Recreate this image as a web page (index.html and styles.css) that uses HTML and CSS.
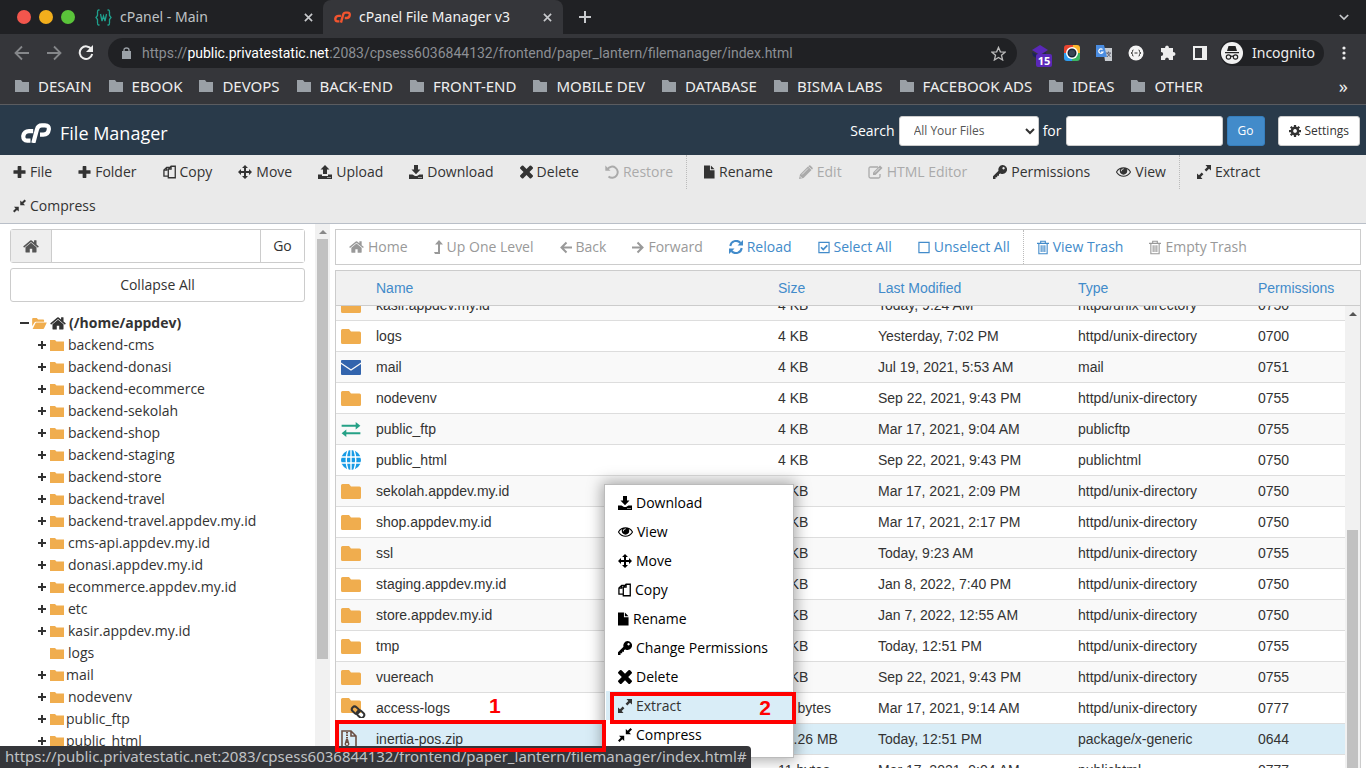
FILE: index.html
```html
<!DOCTYPE html>
<html lang="en">
<head>
<meta charset="utf-8">
<title>cPanel File Manager v3</title>
<link rel="stylesheet" href="styles.css">
</head>
<body>
<svg class="sprite" aria-hidden="true">
  <symbol id="plus" viewBox="0 0 14 14"><path d="M5.500.5h3q.5 0 .5.5v4h4q.5 0 .5.500v3q0 .5-.5.500H9v4q0 .5-.5.500h-3q-.5 0-.5-.5V9H1q-.5 0-.5-.5v-3Q.5 5 1 5h4V1q0-.5.500-.5z"/></symbol>
  <symbol id="thinplus" viewBox="1 0 10 10"><path d="M4 1h2v3h3v2H6v3H4V6H1V4h3z"/></symbol>
  <symbol id="minus" viewBox="0 0 10 10"><path d="M0 4h9v2H0z"/></symbol>
  <symbol id="copy" viewBox="0 0 14 14"><path fill="none" stroke="currentColor" stroke-width="1.400" d="M5.500 11.500H1V5l3-3h3M4 2v3H1M8.700.8H13.200v12.400H5.700V4zM8.700.8V4h-3"/></symbol>
  <symbol id="move" viewBox="0 0 14 14"><path d="M7 0l3 3H8v3h3V4l3 3-3 3V8H8v3h2l-3 3-3-3h2V8H3v2L0 7l3-3v2h3V3H4z"/></symbol>
  <symbol id="upload" viewBox="0 0 14 14"><path d="M7 0l4.500 4.500H9V9H5V4.500H2.500zM0 9.500h4V11h6V9.500h4V14H0z"/><path fill="#fff" d="M9.500 12h1v1h-1zM11.500 12h1v1h-1z"/></symbol>
  <symbol id="download" viewBox="0 0 14 14"><path d="M5 0h4v4.500h2.500L7 9.200 2.500 4.500H5zM0 9.500h3.500L6 11h2l2.500-1.500H14V14H0z"/><path fill="#fff" d="M9.500 12h1v1h-1zM11.500 12h1v1h-1z"/></symbol>
  <symbol id="times" viewBox="300 366 1190 1190"><path d="M1490 1322q0 40-28 68l-136 136q-28 28-68 28t-68-28l-294-294-294 294q-28 28-68 28t-68-28l-136-136q-28-28-28-68t28-68l294-294-294-294q-28-28-28-68t28-68l136-136q28-28 68-28t68 28l294 294 294-294q28-28 68-28t68 28l136 136q28 28 28 68t-28 68l-294 294 294 294q28 28 28 68z"/></symbol>
  <symbol id="undo" viewBox="0 0 14 14"><path fill="none" stroke="currentColor" stroke-width="2" d="M2.500 4A5.600 5.600 0 1 1 3.500 11.500"/><path d="M.3.500l5.200 5.200H.3z"/></symbol>
  <symbol id="file" viewBox="0 0 12 14"><path d="M0 0h6.500v5H11.500v9H0zM7.500 0l4 4h-4z"/></symbol>
  <symbol id="pencil" viewBox="0 0 14 14"><path d="M0 14l1-4.500L9 1.500 12.500 5l-8 8zM9.800.8Q10.600 0 11.400.6l2 2q.7.800 0 1.600l-.4.400L9.400 1.200z"/><path stroke="#eee" stroke-width=".8" d="M3 9.500l6-6M1 11.300L2.700 13"/></symbol>
  <symbol id="edit" viewBox="0 0 15 14"><path fill="none" stroke="currentColor" stroke-width="1.300" d="M10 2H2.500Q1 2 1 3.500v8Q1 13 2.500 13h8q1.500 0 1.500-1.500V9"/><path d="M5 10V7.500L12 .5l2.500 2.500-7 7z"/><path stroke="#eee" stroke-width=".8" d="M7 7.500l4.500-4.500"/></symbol>
  <symbol id="key" viewBox="0 0 14 14"><path fill-rule="evenodd" d="M9.500 0a4.500 4.500 0 1 1-2 8.500L6 9v1.700H4.200v1.600H2.500V14H0v-2.800l5.500-5.500A4.500 4.500 0 0 1 9.500 0zm1 2a1.200 1.200 0 1 0 .1 0z"/></symbol>
  <symbol id="eye" viewBox="0 384 1792 1152"><path d="M1664 960q-152-236-381-353 61 104 61 225 0 185-131.500 316.500t-316.500 131.500-316.500-131.500-131.500-316.500q0-121 61-225-229 117-381 353 133 205 333.500 326.500t434.500 121.500 434.500-121.500 333.500-326.500zm-720-384q0-20-14-34t-34-14q-125 0-214.500 89.500t-89.500 214.500q0 20 14 34t34 14 34-14 14-34q0-86 61-147t147-61q20 0 34-14t14-34zm848 384q0 34-20 69-140 230-376.500 368.500t-499.500 138.500-499.500-139-376.500-368q-20-35-20-69t20-69q140-229 376.500-368t499.500-139 499.500 139 376.500 368q20 35 20 69z"/></symbol>
  <symbol id="expand" viewBox="0 0 14 14"><path d="M8.500 0H14v5.500l-2-1.800-2.700 2.700-1.700-1.700L10.300 2zM0 8.500l2 1.800 2.700-2.700 1.700 1.700L3.700 12l1.800 2H0z"/></symbol>
  <symbol id="compress" viewBox="0 0 14 14"><path d="M12.500 0L14 1.500 11.200 4.300 13 6.200H7.800V1l1.900 1.800zM1 7.800h5.200V13l-1.900-1.800L1.500 14 0 12.500l2.800-2.800z"/></symbol>
  <symbol id="home" viewBox="60 240 1672 1330"><path d="M1472 992v480q0 26-19 45t-45 19h-384v-384h-256v384h-384q-26 0-45-19t-19-45v-480q0-1 .5-3t.5-3l575-474 575 474q1 2 1 6zm223-69l-62 74q-8 9-21 11h-3q-13 0-21-7l-692-577-692 577q-12 8-24 7-13-2-21-11l-62-74q-8-10-7-23.500t11-21.500l719-599q32-26 76-26t76 26l244 204v-195q0-14 9-23t23-9h192q14 0 23 9t9 23v408l219 182q10 8 11 21.500t-7 23.500z"/></symbol>
  <symbol id="levelup" viewBox="0 0 9 14"><path d="M5 0l4 4.500H6V14H1l-1-2h4V4.500H1z"/></symbol>
  <symbol id="left" viewBox="0 0 12 12"><path fill="none" stroke="currentColor" stroke-width="2" d="M6.500 1l-5 5 5 5M2 6h10"/></symbol>
  <symbol id="right" viewBox="0 0 12 12"><path fill="none" stroke="currentColor" stroke-width="2" d="M5.500 1l5 5-5 5M10 6H0"/></symbol>
  <symbol id="reload" viewBox="0 0 14 14"><path fill="none" stroke="currentColor" stroke-width="2" d="M1.300 6A5.800 5.800 0 0 1 11.500 3M12.700 8A5.800 5.800 0 0 1 2.500 11"/><path d="M14 0v5.500H8.500zM0 14V8.500h5.500z"/></symbol>
  <symbol id="checked" viewBox="0 0 13 13"><path fill="none" stroke="currentColor" stroke-width="1.300" d="M1 1h11v11H1z"/><path fill="none" stroke="currentColor" stroke-width="1.800" d="M3.300 6.200l2.400 2.500 4.400-4.500"/></symbol>
  <symbol id="unchecked" viewBox="0 0 13 13"><path fill="none" stroke="currentColor" stroke-width="1.300" d="M1 1h11v11H1z"/></symbol>
  <symbol id="trash" viewBox="0 0 13 15"><path fill="none" stroke="currentColor" stroke-width="1.200" d="M4 2.500V.8h5v1.700M0 3h13M2 3v11.300h9V3M4.500 5v7.500M6.500 5v7.500M8.500 5v7.500"/></symbol>
  <symbol id="cog" viewBox="0 0 16 16"><path fill="none" stroke="currentColor" stroke-width="3.400" d="M8 3.800a4.200 4.200 0 1 0 .1 0z"/><path stroke="currentColor" stroke-width="3" d="M8 0v3M8 13v3M0 8h3M13 8h3M2.300 2.300l2 2M11.700 11.700l2 2M13.700 2.300l-2 2M4.300 11.700l-2 2"/></symbol>
  <symbol id="folder" viewBox="0 0 20 15"><path d="M0 1.500Q0 0 1.500 0H8l2 2.500h8.500Q20 2.500 20 4v9.500q0 1.500-1.500 1.500h-17Q0 15 0 13.500z"/></symbol>
  <symbol id="treefolder" viewBox="0 0 14 11"><path d="M0 0h5l1.500 1.500H14V11H0z"/></symbol>
  <symbol id="openfolder" viewBox="0 0 16 12"><path d="M0 9V1q0-1 1-1h4l1.500 1.500H12q1 0 1 1V4H4Q3 4 2.500 5zM.5 12l3-6.300Q3.800 5 4.500 5H16l-3 6.300q-.3.700-1 .7z"/></symbol>
  <symbol id="mail" viewBox="0 0 20 15"><path d="M1 0h18q1 0 1 1v1.500l-10 6.700L0 2.500V1q0-1 1-1zM0 4l10 6.700L20 4v10q0 1-1 1H1q-1 0-1-1z"/></symbol>
  <symbol id="ftp" viewBox="0 0 20 16"><path fill="none" stroke="currentColor" stroke-width="2.200" d="M0 4h17M3 12h17"/><path d="M15 0l5 4-5 4zM5 8l-5 4 5 4z"/></symbol>
  <symbol id="globe" viewBox="0 0 20 20"><circle cx="10" cy="10" r="10"/><path fill="none" stroke="#fff" stroke-width="1.400" d="M10 0v20M0 7h20M0 13h20M7 0Q3.500 10 7 20M13 0q3.500 10 0 20"/></symbol>
  <symbol id="linked" viewBox="0 0 25 20"><path fill="#f0ad4e" d="M0 1.500Q0 0 1.500 0H8l2 2.500h8.500Q20 2.500 20 4v11H1.500Q0 15 0 13.500z"/><g fill="none" stroke="#333" stroke-width="2"><rect x="10.500" y="9" width="8" height="5.500" rx="2.700" transform="rotate(43 14 12)"/><rect x="15.500" y="13" width="8" height="5.500" rx="2.700" transform="rotate(43 19 16)"/></g></symbol>
  <symbol id="zip" viewBox="0 0 16 18"><path fill="none" stroke="#6b4f43" stroke-width="1.600" d="M1 1h9l5 5v11H1zM10 1v5h5"/><path stroke="#6b4f43" stroke-width="2" stroke-dasharray="1.500 1" d="M6 2v7"/><path fill="#6b4f43" d="M5 9h2l1.500 5q0 2-2.500 2t-2.500-2z"/><circle cx="6" cy="14" r="1" fill="#fff"/></symbol>
  <symbol id="close" viewBox="0 0 10 10"><path stroke="currentColor" stroke-width="1.800" d="M1 1l8 8M9 1L1 9"/></symbol>
  <symbol id="cp" viewBox="0 0 30 20"><path fill="none" stroke="currentColor" stroke-width="4.200" stroke-linejoin="round" d="M12.200 8.100H8Q3.200 8.100 2.300 13 2 17.500 6.300 17.700H9.500M12.300 20L16 6.300Q17 2.300 20.800 2.300H24q4.300.2 3.800 4.300-.6 5-5.600 5.100H19"/></symbol>
  <symbol id="bmfolder" viewBox="0 0 14 12"><path d="M0 0h6l1.500 2H14v10H0z"/></symbol>
</svg>

<div class="tabstrip">
  <div class="lights"><i class="red"></i><i class="amber"></i><i class="green"></i></div>
  <div class="tab">
    <svg class="fav" viewBox="0 0 17 17" fill="none" stroke="#1fa08d" stroke-width="1.300"><path d="M4.500 1H3.500Q2.500 1 2.500 3v3.500L1 8.500l1.500 2V14q0 2 1 2h1M12.500 1h1q1 0 1 2v3.500l1.500 2-1.500 2V14q0 2-1 2h-1M5.500 5l1.500 7 1.500-5 1.500 5 1.500-7"/></svg>
    <span>cPanel - Main</span><svg class="x"><use href="#close"/></svg>
  </div>
  <div class="tab active">
    <svg class="fav logo"><use href="#cp"/></svg>
    <span>cPanel File Manager v3</span><svg class="x"><use href="#close"/></svg>
  </div>
  <svg class="newtab" viewBox="0 0 12 12"><path stroke="currentColor" stroke-width="2" d="M6 0v12M0 6h12"/></svg>
  <svg class="chev" viewBox="0 0 12 8" fill="none"><path stroke="currentColor" stroke-width="2" d="M1 1l5 5 5-5"/></svg>
</div>

<div class="navbar">
  <div class="navicons">
    <svg class="dim" viewBox="0 0 16 16" fill="none" stroke="currentColor" stroke-width="1.800"><path d="M8 1.500L1.500 8 8 14.500M2 8h13"/></svg>
    <svg class="dim" viewBox="0 0 16 16" fill="none" stroke="currentColor" stroke-width="1.800"><path d="M8 1.500L14.500 8 8 14.500M14 8H1"/></svg>
    <svg viewBox="0 0 16 16"><path fill="none" stroke="currentColor" stroke-width="2" d="M13.500 4.500A6.300 6.300 0 1 0 14.200 9"/><path d="M15 0v7H8z"/></svg>
  </div>
  <div class="urlbar">
    <svg class="lock" viewBox="0 0 9 12"><path d="M0 4h9v8H0z"/><path fill="none" stroke="currentColor" stroke-width="1.300" d="M2 5V3q0-2 2.500-2T7 3v2"/></svg>
    <span class="url">https://<b>public.privatestatic.net</b>:2083/cpsess6036844132/frontend/paper_lantern/filemanager/index.html</span>
    <svg class="star" viewBox="0 0 16 16" fill="none" stroke="currentColor" stroke-width="1.400"><path d="M8 1.500l2 4.700 5 .4-3.800 3.300 1.200 5L8 12.200l-4.400 2.700 1.200-5L1 6.600l5-.4z"/></svg>
  </div>
  <div class="exts">
    <div class="ext-badge"><svg viewBox="0 0 16 16"><path fill="#1c2259" d="M0 7l8 4 6-4v3l-6 5-7-4z"/><path fill="#5a28b8" d="M8 0l8 5-8 5-8-5z"/></svg><span>15</span></div>
    <svg viewBox="0 0 16 16"><path fill="#e8442f" d="M0 3q0-3 3-3h7L8 8H0z"/><path fill="#fbb62b" d="M9 0h4q3 0 3 3v5H8z"/><path fill="#2f9df0" d="M0 8h8v8H3q-3 0-3-3z"/><path fill="#3ab663" d="M8 8h8v5q0 3-3 3H8z"/><circle cx="8" cy="8" r="6" fill="#fff"/><circle cx="8" cy="8" r="3.800" fill="#394655" stroke="#142334" stroke-width="1.400"/></svg>
    <svg viewBox="0 0 16 16"><path fill="#c7cbd0" d="M7 3h9v13H9z"/><path fill="#4a8ce0" d="M0 0h8l3 12H0z"/><path fill="none" stroke="#fff" stroke-width="1.200" d="M6.500 4.500A2.200 2.200 0 1 0 7 7H5"/><path fill="none" stroke="#667" d="M10 8h5M12.500 6.500V8M11 8l3.500 4M14.500 8L11 12"/></svg>
    <svg viewBox="0 0 16 16"><circle cx="8" cy="8" r="7.500" fill="#f4f4f4"/><path fill="none" stroke="#333" d="M5.500 5Q4 5 4.500 6.500 4.500 8 3 8q1.500 0 1.500 1.500Q4 11 5.500 11M10.500 5q1.500 0 1 1.500 0 1.500 1.500 1.500-1.500 0-1.500 1.500.5 1.500-1 1.500M6.500 8h3"/></svg>
    <svg viewBox="0 0 16 16"><path fill="#eee" d="M1 3h4Q5 .5 7 .5T9 3h4v4q2.500 0 2.500 2T13 11v4H9q0-2.500-2-2.500T5 15H1v-4q2.200 0 2.200-2T1 7z"/></svg>
    <svg viewBox="0 0 16 16"><path fill="#eee" fill-rule="evenodd" d="M1 1h14v14H1zM3 3h7v10H3z"/></svg>
  </div>
  <div class="incog">
    <svg viewBox="0 0 22 22"><circle cx="11" cy="11" r="11" fill="#f1f1f1"/><path fill="#222" d="M7.500 4h7l1.500 5H6zM4 10h14v1.200H4z"/><g fill="none" stroke="#222" stroke-width="1.200"><circle cx="7.500" cy="15" r="2.200"/><circle cx="14.500" cy="15" r="2.200"/><path d="M9.500 14.500q1.500-.8 3 0"/></g></svg>
    <span>Incognito</span>
  </div>
  <svg class="kebab" viewBox="0 0 4 14"><circle cx="2" cy="2" r="1.600"/><circle cx="2" cy="7" r="1.600"/><circle cx="2" cy="12" r="1.600"/></svg>
</div>

<div class="bookmarks">
  <a href="#"><svg><use href="#bmfolder"/></svg>DESAIN</a>
  <a href="#"><svg><use href="#bmfolder"/></svg>EBOOK</a>
  <a href="#"><svg><use href="#bmfolder"/></svg>DEVOPS</a>
  <a href="#"><svg><use href="#bmfolder"/></svg>BACK-END</a>
  <a href="#"><svg><use href="#bmfolder"/></svg>FRONT-END</a>
  <a href="#"><svg><use href="#bmfolder"/></svg>MOBILE DEV</a>
  <a href="#"><svg><use href="#bmfolder"/></svg>DATABASE</a>
  <a href="#"><svg><use href="#bmfolder"/></svg>BISMA LABS</a>
  <a href="#"><svg><use href="#bmfolder"/></svg>FACEBOOK ADS</a>
  <a href="#"><svg><use href="#bmfolder"/></svg>IDEAS</a>
  <a href="#"><svg><use href="#bmfolder"/></svg>OTHER</a>
  <span class="more">»</span>
</div>

<header class="header">
  <div class="title"><svg class="brand"><use href="#cp"/></svg><h1>File Manager</h1></div>
  <form class="search">
    <label for="scope">Search</label>
    <span class="selectwrap"><select id="scope"><option>All Your Files</option></select><svg viewBox="0 0 10 7" fill="none"><path stroke="currentColor" stroke-width="2" d="M1 1l4 4 4-4"/></svg></span>
    <label for="query">for</label>
    <input id="query" type="text">
    <button class="go" type="button">Go</button>
    <button class="settings" type="button"><svg><use href="#cog"/></svg>Settings</button>
  </form>
</header>

<nav class="toolbar">
  <button><svg class="mid"><use href="#plus"/></svg>File</button>
  <button><svg class="mid"><use href="#plus"/></svg>Folder</button>
  <button><svg class="mid"><use href="#copy"/></svg>Copy</button>
  <button><svg><use href="#move"/></svg>Move</button>
  <button><svg><use href="#upload"/></svg>Upload</button>
  <button><svg><use href="#download"/></svg>Download</button>
  <button><svg class="mid"><use href="#times"/></svg>Delete</button>
  <button disabled><svg><use href="#undo"/></svg>Restore</button>
  <i class="sep"></i>
  <button><svg class="narrow"><use href="#file"/></svg>Rename</button>
  <button disabled><svg><use href="#pencil"/></svg>Edit</button>
  <button disabled><svg class="wide"><use href="#edit"/></svg>HTML Editor</button>
  <button><svg><use href="#key"/></svg>Permissions</button>
  <button><svg class="wide"><use href="#eye"/></svg>View</button>
  <i class="sep"></i>
  <button><svg><use href="#expand"/></svg>Extract</button>
  <button><svg class="mid"><use href="#compress"/></svg>Compress</button>
</nav>

<main class="main">
  <aside class="side">
    <div class="sidebody">
      <div class="pathgroup"><button class="homebtn" aria-label="Home"><svg><use href="#home"/></svg></button><input type="text" aria-label="Path"><button class="pathgo">Go</button></div>
      <button class="collapse">Collapse All</button>
      <ul class="tree">
        <li class="root"><svg class="tg"><use href="#minus"/></svg><svg class="of"><use href="#openfolder"/></svg><svg class="hm"><use href="#home"/></svg>(/home/appdev)</li>
        <li><svg class="tg"><use href="#thinplus"/></svg><svg class="tf"><use href="#treefolder"/></svg>backend-cms</li>
        <li><svg class="tg"><use href="#thinplus"/></svg><svg class="tf"><use href="#treefolder"/></svg>backend-donasi</li>
        <li><svg class="tg"><use href="#thinplus"/></svg><svg class="tf"><use href="#treefolder"/></svg>backend-ecommerce</li>
        <li><svg class="tg"><use href="#thinplus"/></svg><svg class="tf"><use href="#treefolder"/></svg>backend-sekolah</li>
        <li><svg class="tg"><use href="#thinplus"/></svg><svg class="tf"><use href="#treefolder"/></svg>backend-shop</li>
        <li><svg class="tg"><use href="#thinplus"/></svg><svg class="tf"><use href="#treefolder"/></svg>backend-staging</li>
        <li><svg class="tg"><use href="#thinplus"/></svg><svg class="tf"><use href="#treefolder"/></svg>backend-store</li>
        <li><svg class="tg"><use href="#thinplus"/></svg><svg class="tf"><use href="#treefolder"/></svg>backend-travel</li>
        <li><svg class="tg"><use href="#thinplus"/></svg><svg class="tf"><use href="#treefolder"/></svg>backend-travel.appdev.my.id</li>
        <li><svg class="tg"><use href="#thinplus"/></svg><svg class="tf"><use href="#treefolder"/></svg>cms-api.appdev.my.id</li>
        <li><svg class="tg"><use href="#thinplus"/></svg><svg class="tf"><use href="#treefolder"/></svg>donasi.appdev.my.id</li>
        <li><svg class="tg"><use href="#thinplus"/></svg><svg class="tf"><use href="#treefolder"/></svg>ecommerce.appdev.my.id</li>
        <li><svg class="tg"><use href="#thinplus"/></svg><svg class="tf"><use href="#treefolder"/></svg>etc</li>
        <li><svg class="tg"><use href="#thinplus"/></svg><svg class="tf"><use href="#treefolder"/></svg>kasir.appdev.my.id</li>
        <li><svg class="tg"></svg><svg class="tf"><use href="#treefolder"/></svg>logs</li>
        <li class="typed"><svg class="tg"><use href="#thinplus"/></svg><svg class="tf"><use href="#treefolder"/></svg>mail</li>
        <li><svg class="tg"><use href="#thinplus"/></svg><svg class="tf"><use href="#treefolder"/></svg>nodevenv</li>
        <li class="typed"><svg class="tg"><use href="#thinplus"/></svg><svg class="tf"><use href="#treefolder"/></svg>public_ftp</li>
        <li class="typed"><svg class="tg"><use href="#thinplus"/></svg><svg class="tf"><use href="#treefolder"/></svg>public_html</li>
      </ul>
    </div>
    <div class="scroll sidescroll"><svg viewBox="0 0 8 4"><path d="M4 0l4 4H0z"/></svg><i></i></div>
  </aside>

  <section class="content">
    <div class="actions">
      <button disabled><svg class="wide"><use href="#home"/></svg>Home</button>
      <button disabled><svg class="thin"><use href="#levelup"/></svg>Up One Level</button>
      <button disabled><svg><use href="#left"/></svg>Back</button>
      <button disabled><svg><use href="#right"/></svg>Forward</button>
      <button><svg class="round"><use href="#reload"/></svg>Reload</button>
      <button><svg><use href="#checked"/></svg>Select All</button>
      <button><svg><use href="#unchecked"/></svg>Unselect All</button>
      <i class="sep"></i>
      <button><svg class="bin"><use href="#trash"/></svg>View Trash</button>
      <button disabled><svg class="bin"><use href="#trash"/></svg>Empty Trash</button>
    </div>
    <div class="files">
      <table>
        <thead><tr><th></th><th>Name</th><th>Size</th><th>Last Modified</th><th>Type</th><th>Permissions</th></tr></thead>
        <tbody>
          <tr><td><svg class="fi"><use href="#folder"/></svg></td><td>kasir.appdev.my.id</td><td>4 KB</td><td>Today, 9:24 AM</td><td>httpd/unix-directory</td><td>0750</td></tr>
          <tr><td><svg class="fi"><use href="#folder"/></svg></td><td>logs</td><td>4 KB</td><td>Yesterday, 7:02 PM</td><td>httpd/unix-directory</td><td>0700</td></tr>
          <tr><td><svg class="fi blue"><use href="#mail"/></svg></td><td>mail</td><td>4 KB</td><td>Jul 19, 2021, 5:53 AM</td><td>mail</td><td>0751</td></tr>
          <tr><td><svg class="fi"><use href="#folder"/></svg></td><td>nodevenv</td><td>4 KB</td><td>Sep 22, 2021, 9:43 PM</td><td>httpd/unix-directory</td><td>0755</td></tr>
          <tr><td><svg class="fi teal"><use href="#ftp"/></svg></td><td>public_ftp</td><td>4 KB</td><td>Mar 17, 2021, 9:04 AM</td><td>publicftp</td><td>0755</td></tr>
          <tr><td><svg class="fi sky"><use href="#globe"/></svg></td><td>public_html</td><td>4 KB</td><td>Sep 22, 2021, 9:43 PM</td><td>publichtml</td><td>0750</td></tr>
          <tr><td><svg class="fi"><use href="#folder"/></svg></td><td>sekolah.appdev.my.id</td><td>4 KB</td><td>Mar 17, 2021, 2:09 PM</td><td>httpd/unix-directory</td><td>0750</td></tr>
          <tr><td><svg class="fi"><use href="#folder"/></svg></td><td>shop.appdev.my.id</td><td>4 KB</td><td>Mar 17, 2021, 2:17 PM</td><td>httpd/unix-directory</td><td>0750</td></tr>
          <tr><td><svg class="fi"><use href="#folder"/></svg></td><td>ssl</td><td>4 KB</td><td>Today, 9:23 AM</td><td>httpd/unix-directory</td><td>0755</td></tr>
          <tr><td><svg class="fi"><use href="#folder"/></svg></td><td>staging.appdev.my.id</td><td>4 KB</td><td>Jan 8, 2022, 7:40 PM</td><td>httpd/unix-directory</td><td>0750</td></tr>
          <tr><td><svg class="fi"><use href="#folder"/></svg></td><td>store.appdev.my.id</td><td>4 KB</td><td>Jan 7, 2022, 12:55 AM</td><td>httpd/unix-directory</td><td>0750</td></tr>
          <tr><td><svg class="fi"><use href="#folder"/></svg></td><td>tmp</td><td>4 KB</td><td>Today, 12:51 PM</td><td>httpd/unix-directory</td><td>0755</td></tr>
          <tr><td><svg class="fi"><use href="#folder"/></svg></td><td>vuereach</td><td>4 KB</td><td>Sep 22, 2021, 9:43 PM</td><td>httpd/unix-directory</td><td>0755</td></tr>
          <tr><td><svg class="fi link"><use href="#linked"/></svg></td><td>access-logs</td><td>34 bytes</td><td>Mar 17, 2021, 9:14 AM</td><td>httpd/unix-directory</td><td>0777</td></tr>
          <tr class="selected"><td><svg class="fi zip"><use href="#zip"/></svg></td><td>inertia-pos.zip</td><td>17.26 MB</td><td>Today, 12:51 PM</td><td>package/x-generic</td><td>0644</td></tr>
          <tr><td><svg class="fi sky"><use href="#globe"/></svg></td><td>www</td><td>11 bytes</td><td>Mar 17, 2021, 9:04 AM</td><td>publichtml</td><td>0777</td></tr>
        </tbody>
      </table>
      <div class="scroll filescroll"><svg viewBox="0 0 8 4"><path d="M4 0l4 4H0z"/></svg><i></i></div>
    </div>
  </section>
</main>

<div class="menu">
  <button><svg><use href="#download"/></svg>Download</button>
  <button><svg class="wide"><use href="#eye"/></svg>View</button>
  <button><svg><use href="#move"/></svg>Move</button>
  <button><svg class="mid"><use href="#copy"/></svg>Copy</button>
  <button><svg class="narrow"><use href="#file"/></svg>Rename</button>
  <button><svg><use href="#key"/></svg>Change Permissions</button>
  <button><svg><use href="#times"/></svg>Delete</button>
  <button class="hover"><svg><use href="#expand"/></svg>Extract</button>
  <button><svg><use href="#compress"/></svg>Compress</button>
</div>
<div class="status">https://public.privatestatic.net:2083/cpsess6036844132/frontend/paper_lantern/filemanager/index.html#</div>
<div class="mark mark-file"></div>
<div class="mark mark-extract">2</div>
<div class="step">1</div>
</body>
</html>
```
FILE: styles.css
```css
* { box-sizing: border-box; }
html, body { height: 100%; margin: 0; }
body {
  position: relative;
  display: flex;
  flex-direction: column;
  overflow: hidden;
  font: 14px/20px "Open Sans", "Noto Sans", sans-serif;
  color: #333;
  background: #fff;
}
svg { flex: none; }
svg:not([fill]) { fill: currentColor; }
button, input, select { font: inherit; color: inherit; margin: 0; }
button { cursor: pointer; white-space: nowrap; }
.sprite { position: absolute; width: 0; height: 0; }

/* Browser window */
.tabstrip, .navbar, .bookmarks { flex: none; display: flex; align-items: center; font: 14px/20px "Noto Sans", sans-serif; }
.tabstrip { height: 34px; background: #202124; color: #c8cacd; padding-left: 17px; padding-right: 17px; }
.lights { display: flex; gap: 8px; width: 68px; }
.lights i { width: 14px; height: 14px; border-radius: 50%; }
.red { background: #f2564d; }
.amber { background: #f2ae1c; }
.green { background: #5ac43a; }
.tab { display: flex; align-items: center; gap: 8px; width: 238px; height: 34px; padding: 0 10px 0 10px; }
.tab span { flex: 1; white-space: nowrap; color: #bfc1c4; }
.tab.active { width: 240px; background: #35363a; border-radius: 8px 8px 0 0; padding-left: 11px; padding-right: 11px; }
.tab.active span { color: #f1f1f1; }
.fav { width: 17px; height: 17px; }
.logo { color: #f2542f; height: 12px; }
.x { width: 9px; height: 9px; }
.newtab { width: 12px; height: 12px; margin-left: 16px; }
.chev { width: 10px; height: 7px; margin-left: auto; }
.navbar { height: 38px; background: #35363a; color: #eee; padding: 0 20px 0 14px; }
.navicons { display: flex; gap: 16px; width: 94px; }
.navicons svg { width: 16px; height: 16px; }
.dim { color: #85878a; }
.urlbar { flex: 1; min-width: 0; height: 30px; display: flex; align-items: center; background: #202124; border-radius: 15px; padding: 0 11px 0 14px; }
.lock { width: 9px; height: 12px; margin-right: 11px; color: #9aa0a6; }
.url { flex: 1; white-space: nowrap; overflow: hidden; color: #8c8f94; font-family: Roboto, "Noto Sans", sans-serif; }
.url b { color: #fff; font-weight: 400; }
.star { width: 15px; height: 15px; color: #bbb; }
.exts { display: flex; gap: 16px; margin: 0 12px 0 15px; }
.exts svg { width: 16px; height: 16px; display: block; }
.ext-badge { position: relative; width: 16px; }
.ext-badge span { position: absolute; left: 4px; top: 9px; width: 16px; height: 13px; border-radius: 2px; background: #5a28b8; color: #fff; font: bold 11px/13px "Noto Sans", sans-serif; text-align: center; }
.incog { display: flex; align-items: center; gap: 9px; height: 26px; border-radius: 13px; background: #202124; padding: 0 9px 0 1px; }
.incog svg { width: 22px; height: 22px; }
.kebab { width: 4px; height: 14px; margin-left: 18px; }
.bookmarks { height: 33px; background: #35363a; color: #eee; gap: 17px; padding: 0 18px 5px 15px; border-bottom: 1px solid #5b5c60; font-size: 15px; }
.bookmarks a { display: flex; align-items: center; gap: 9px; color: inherit; text-decoration: none; white-space: nowrap; }
.bookmarks svg { width: 14px; height: 12px; color: #9aa0a6; }
.more { margin-left: auto; font-size: 18px; }

/* Header */
.header { flex: none; display: flex; align-items: center; height: 50px; padding: 2px 6px 0 21px; background: #293a4a; color: #fff; }
.title { display: flex; align-items: center; padding-top: 4px; }
.brand { width: 30px; height: 20px; }
.header h1 { margin: 0 0 0 9px; font-size: 18px; line-height: 24px; font-weight: 400; }
.search { display: flex; align-items: center; gap: 4px; margin-left: auto; }
.search input { width: 157px; height: 30px; border: 1px solid #ccc; border-radius: 3px; background: #fff; }
.selectwrap { position: relative; display: flex; color: #333; }
.selectwrap svg { position: absolute; right: 4px; top: 12px; width: 10px; height: 7px; pointer-events: none; }
.search select { appearance: none; width: 140px; height: 30px; border: 1px solid #ccc; border-radius: 3px; background: #fff; color: #555; font-size: 12px; padding: 0 14px; }
.go, .settings { height: 30px; border-radius: 3px; font-size: 12px; padding: 0 10px; }
.go { width: 38px; border: 1px solid #357ebd; background: #428bca; color: #fff; }
.settings { display: flex; align-items: center; gap: 4px; margin-left: 9px; border: 1px solid #ccc; background: #fff; color: #333; }
.settings svg { width: 12px; height: 12px; }

/* Toolbars */
.toolbar { flex: none; display: flex; flex-wrap: wrap; background: #eaeaea; border-bottom: 1px solid #b9bfc8; }
.toolbar button, .actions button { display: flex; align-items: center; gap: 4px; height: 34px; border: 0; background: none; padding: 0 13px; }
.toolbar button:disabled { color: #aaa; }
.toolbar svg, .menu svg { width: 14px; height: 14px; }
.toolbar .mid, .menu .mid { width: 13px; }
.toolbar .wide, .actions .wide, .menu .wide { width: 15px; height: 14px; }
.toolbar .narrow, .menu .narrow { width: 11px; }
.sep { width: 5px; border-left: 1px dotted #bbb; }

/* Side panel */
.main { flex: 1; min-height: 0; display: flex; }
.side { flex: none; width: 330px; display: flex; }
.sidebody { flex: 1; padding: 5px 10px 0; overflow: hidden; }
.pathgroup { display: flex; height: 34px; border: 1px solid #ccc; border-radius: 3px; }
.pathgroup button { border: 0; background: #fff; }
.pathgroup .homebtn { width: 41px; background: #eee; color: #555; border-right: 1px solid #ccc; padding: 0; }
.homebtn svg { width: 16px; height: 13px; display: block; margin: 0 auto; }
.pathgroup input { flex: 1; min-width: 0; border: 0; }
.pathgroup .pathgo { width: 44px; border-left: 1px solid #ccc; padding: 0; }
.collapse { display: block; width: 100%; height: 34px; margin-top: 5px; border: 1px solid #ccc; border-radius: 3px; background: #fff; }
.tree { list-style: none; margin: 10px 0 0; padding: 0 0 0 28px; }
.tree li { display: flex; align-items: center; height: 22px; white-space: nowrap; }
.tree .root { margin-left: -18px; font-weight: 700; }
.tg { width: 10px; height: 10px; margin-right: 2px; }
.tf { width: 14px; height: 11px; margin-right: 4px; color: #f0ad4e; }
.typed .tf { margin-right: 2px; }
.of { width: 15px; height: 11px; margin-right: 3px; color: #f0ad4e; }
.hm { width: 16px; height: 13px; margin-right: 3px; }
.scroll { flex: none; width: 15px; display: flex; flex-direction: column; align-items: center; background: #f1f1f1; }
.scroll svg { width: 8px; height: 4px; margin: 6px 0 5px; color: #888; }
.scroll i { width: 11px; background: #c1c1c1; }
.sidescroll i { height: 420px; }

/* File list */
.content { flex: 1; min-width: 0; display: flex; flex-direction: column; gap: 5px; padding: 5px 5px 0; }
.actions { flex: none; display: flex; height: 36px; border: 1px solid #ccc; overflow: hidden; }
.actions button { color: #428bca; }
.actions button:disabled { color: #999; }
.actions svg { width: 12px; height: 13px; }
.actions .thin { width: 9px; height: 14px; }
.actions .round { width: 14px; height: 14px; }
.actions .bin { height: 15px; }
.actions .sep { width: 1px; }
.files { position: relative; flex: 1; min-height: 0; border: 1px solid #ccc; border-bottom: 0; overflow: hidden; font: 14px/20px "Liberation Sans", Arial, sans-serif; }
.files table, .files thead { display: block; }
.files tbody { display: block; overflow: hidden; padding-right: 15px; }
.files tr { display: grid; grid-template-columns: 40px minmax(0, 1fr) 100px 200px 180px 87px; align-items: center; height: 31px; border-bottom: 1px solid #ddd; background: #f9f9f9; }
.files tr:nth-child(even) { background: #fff; }
.files tbody tr:first-child { margin-top: -16px; }
.files thead tr { height: 35px; background: #f1f1f1; border-color: #ccc; padding-right: 15px; }
.files tbody tr.selected { background: #d9edf7; }
.files th { padding: 0; text-align: left; font-weight: 400; color: #428bca; }
.files td { padding: 0; white-space: nowrap; }
.files td:first-child { padding-left: 5px; }
.fi { display: block; width: 20px; height: 15px; color: #f0ad4e; }
.fi.blue { color: #3264ad; }
.fi.teal { color: #25a186; }
.fi.sky { color: #179be5; height: 20px; }
.fi.link { width: 25px; height: 20px; }
.fi.zip { width: 16px; height: 18px; }
.filescroll { position: absolute; right: 0; top: 35px; bottom: 0; width: 15px; }
.filescroll svg { color: #555; }
.filescroll i { flex: 1; margin-top: 209px; }

/* Context menu, status bubble and highlights */
.menu { position: absolute; left: 604px; top: 484px; width: 190px; padding: 3px 1px 8px; border: 1px solid #bbb; background: #fff; box-shadow: 0 0 14px 2px rgba(0, 0, 0, .35); color: #000; }
.menu button { display: flex; align-items: center; gap: 4px; width: 100%; height: 29px; border: 0; background: none; padding: 0 12px; }
.menu .hover { background: #d9edf7; color: #333; }
.status { position: absolute; left: 0; bottom: 0; height: 22px; padding: 0 4px 0 5px; border-radius: 0 4px 0 0; background: #35363a; color: #c0c2c5; font: 15px/21px "Noto Sans", sans-serif; white-space: nowrap; }
.mark { position: absolute; border: 4px solid #f00; height: 32px; }
.mark, .step { color: #f00; font: bold 21px/24px "Liberation Sans", Arial, sans-serif; }
.mark-file { left: 335px; top: 720px; width: 271px; }
.mark-extract { left: 610px; top: 692px; width: 186px; padding-right: 21px; text-align: right; }
.step { position: absolute; left: 489px; top: 694px; }
```
